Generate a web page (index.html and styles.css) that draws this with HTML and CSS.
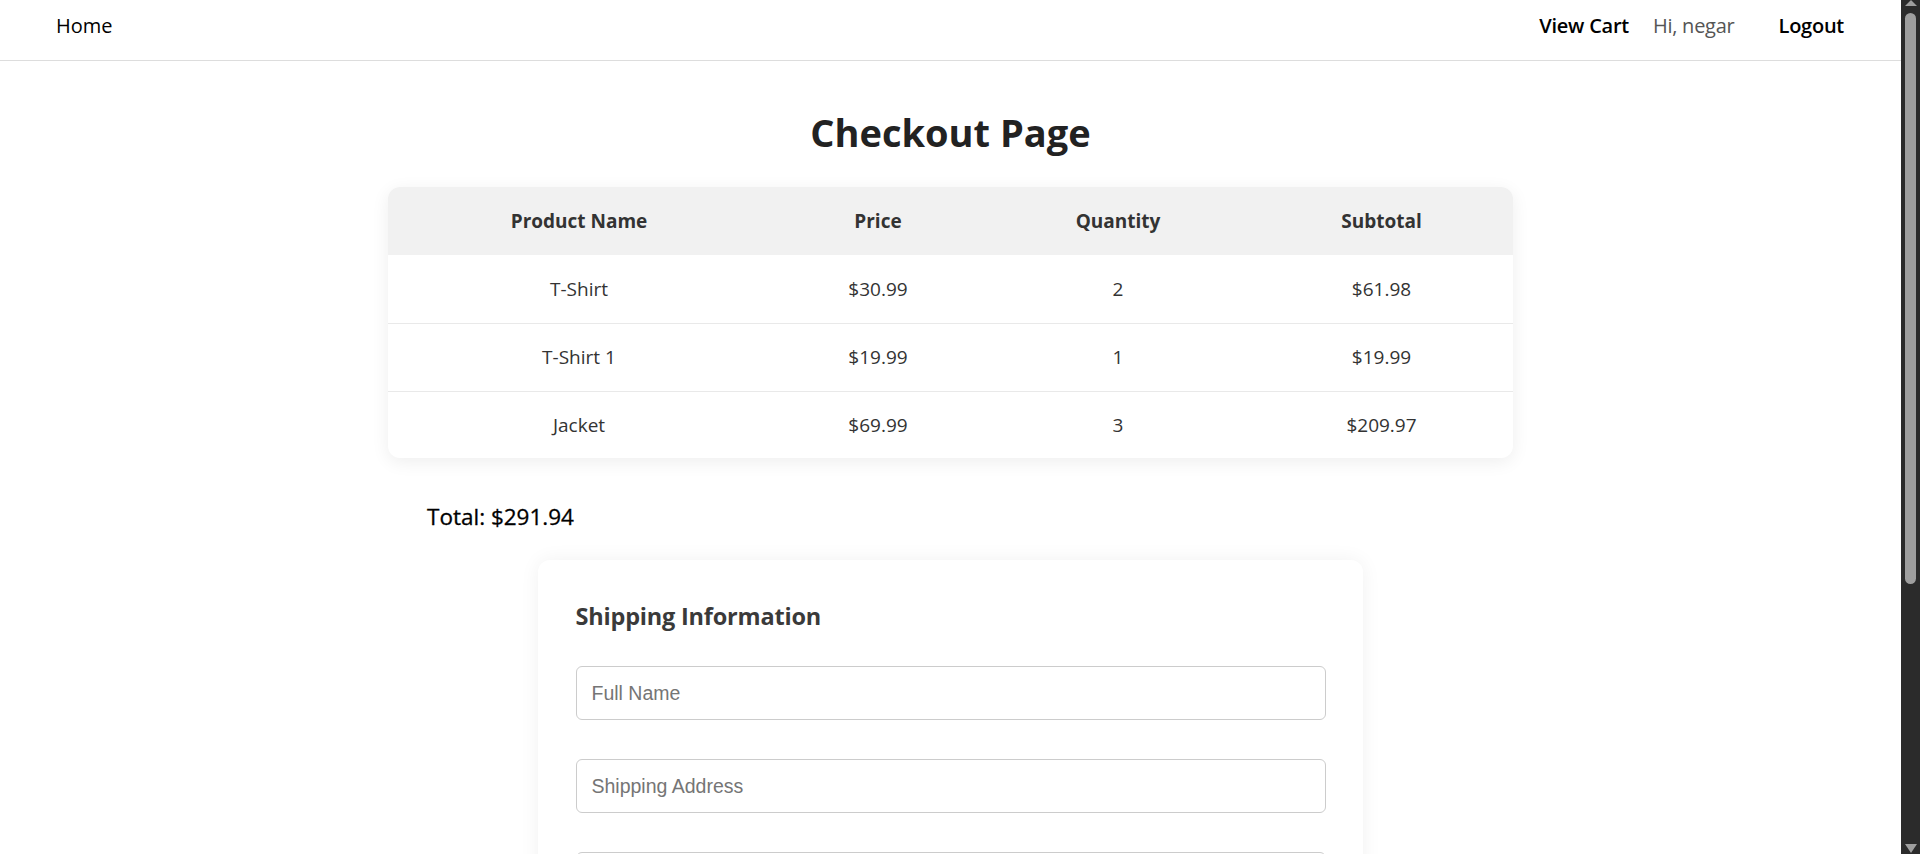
FILE: index.html
```html
<!DOCTYPE html>
<html lang="en">
<head>
<meta charset="utf-8">
<title>Checkout Page</title>
<link rel="stylesheet" href="styles.css">
</head>
<body>
<div class="page">
  <nav class="navbar">
    <a class="nav-link nav-home" href="#">Home</a>
    <div class="nav-right">
      <a class="nav-link nav-strong" href="#">View Cart</a>
      <span class="nav-greeting">Hi, negar</span>
      <button class="nav-logout" type="button">Logout</button>
    </div>
  </nav>

  <main class="main">
    <h1 class="page-title">Checkout Page</h1>

    <div class="table-card">
      <table class="cart-table">
        <colgroup>
          <col class="col-name">
          <col class="col-price">
          <col class="col-qty">
          <col class="col-sub">
        </colgroup>
        <thead>
          <tr>
            <th>Product Name</th>
            <th>Price</th>
            <th>Quantity</th>
            <th>Subtotal</th>
          </tr>
        </thead>
        <tbody>
          <tr>
            <td>T-Shirt</td>
            <td>$30.99</td>
            <td>2</td>
            <td>$61.98</td>
          </tr>
          <tr>
            <td>T-Shirt 1</td>
            <td>$19.99</td>
            <td>1</td>
            <td>$19.99</td>
          </tr>
          <tr>
            <td>Jacket</td>
            <td>$69.99</td>
            <td>3</td>
            <td>$209.97</td>
          </tr>
        </tbody>
      </table>
    </div>

    <div class="total">Total: $291.94</div>

    <form class="shipping-card">
      <h2 class="shipping-title">Shipping Information</h2>
      <input class="field" type="text" placeholder="Full Name">
      <input class="field" type="text" placeholder="Shipping Address">
      <input class="field" type="text" placeholder="Phone Number">
      <button class="place-order" type="button">Place Order</button>
    </form>
  </main>
</div>

<aside class="scrollbar" aria-hidden="true">
  <div class="sb-arrow sb-up"></div>
  <div class="sb-track">
    <div class="sb-thumb"></div>
  </div>
  <div class="sb-arrow sb-down"></div>
</aside>
</body>
</html>
```

FILE: styles.css
```css
* {
  box-sizing: border-box;
}

html, body {
  margin: 0;
  padding: 0;
  background: #ffffff;
}

body {
  display: flex;
  align-items: flex-start;
  font-family: "Open Sans", "Noto Sans", "Liberation Sans", sans-serif;
  color: #333333;
}

.page {
  flex: 1;
  min-width: 0;
  padding-bottom: 108px;
}

/* ---------- Navbar ---------- */
.navbar {
  height: 61px;
  display: flex;
  justify-content: space-between;
  align-items: flex-start;
  padding: 12px 57px 0 56px;
  border-bottom: 1px solid #dddddd;
  font-size: 20px;
  line-height: 27px;
}

.nav-link {
  color: #000000;
  text-decoration: none;
}

.nav-home {
  font-weight: 500;
}

.nav-right {
  display: flex;
  align-items: flex-start;
  gap: 24px;
  letter-spacing: -0.25px;
}

.nav-strong {
  font-weight: 600;
}

.nav-greeting {
  color: #555555;
}

.nav-logout {
  margin-left: 20px;
  padding: 0;
  border: 0;
  background: transparent;
  font: inherit;
  font-weight: 600;
  line-height: 27px;
  letter-spacing: -0.25px;
  color: #000000;
  cursor: pointer;
}

/* ---------- Main ---------- */
.main {
  padding-top: 44px;
}

.page-title {
  margin: 0 0 28px;
  text-align: center;
  font-size: 38px;
  line-height: 54px;
  font-weight: 700;
  color: #222222;
}

/* ---------- Cart table ---------- */
.table-card {
  width: 1125px;
  margin: 0 auto;
  background: #ffffff;
  border-radius: 12px;
  overflow: hidden;
  box-shadow: 0 4px 18px rgba(0, 0, 0, 0.07);
}

.cart-table {
  width: 100%;
  border-collapse: collapse;
  table-layout: fixed;
  font-size: 19px;
}

.col-name { width: 382px; }
.col-price { width: 216px; }
.col-qty { width: 264px; }
.col-sub { width: 263px; }

.cart-table th {
  height: 68px;
  padding: 0;
  background: #f1f1f1;
  font-weight: 700;
  color: #333333;
  text-align: center;
}

.cart-table td {
  height: 68px;
  padding: 0;
  text-align: center;
  color: #333333;
  border-bottom: 1px solid #e9e9e9;
}

.cart-table tbody tr:last-child td {
  height: 67px;
  border-bottom: 0;
}

/* ---------- Total ---------- */
.total {
  width: 1125px;
  margin: 43px auto 27px;
  padding-left: 39px;
  font-size: 22.5px;
  line-height: 32px;
  font-weight: 500;
  color: #000000;
  -webkit-text-stroke: 0.3px #000000;
}

/* ---------- Shipping card ---------- */
.shipping-card {
  width: 825px;
  margin: 0 auto;
  padding: 40px 37.5px 37px;
  background: #ffffff;
  border-radius: 12px;
  box-shadow: 0 0 20px rgba(0, 0, 0, 0.06);
  display: flex;
  flex-direction: column;
}

.shipping-title {
  margin: 0 0 34px;
  font-size: 23.5px;
  line-height: 32px;
  font-weight: 700;
  color: #3a3a3a;
  letter-spacing: -0.2px;
}

.field {
  display: block;
  width: 100%;
  height: 54px;
  margin: 0 0 39px;
  padding: 0 15px;
  border: 1px solid #cccccc;
  border-radius: 6px;
  font-family: "Liberation Sans", Arial, sans-serif;
  font-size: 19.5px;
  color: #333333;
  background: #ffffff;
}

.field::placeholder {
  color: #757575;
}

.place-order {
  height: 54px;
  border: 0;
  border-radius: 6px;
  background: #28a745;
  color: #ffffff;
  font: inherit;
  font-size: 20px;
  font-weight: 600;
}

/* ---------- Fake scrollbar ---------- */
.scrollbar {
  position: sticky;
  top: 0;
  flex: 0 0 19px;
  width: 19px;
  height: 100vh;
  background: #2b2b2b;
  display: flex;
  flex-direction: column;
  align-items: center;
}

.sb-arrow {
  width: 0;
  height: 0;
  border-left: 6px solid transparent;
  border-right: 6px solid transparent;
}

.sb-up {
  margin-top: 0;
  border-bottom: 6px solid #9e9e9e;
}

.sb-down {
  margin-bottom: 1px;
  border-top: 9px solid #9e9e9e;
}

.sb-track {
  flex: 1;
  width: 100%;
  padding-top: 7px;
  display: flex;
  justify-content: center;
  align-items: flex-start;
}

.sb-thumb {
  width: 11px;
  height: 571px;
  border-radius: 6px;
  background: #9e9e9e;
}
```
